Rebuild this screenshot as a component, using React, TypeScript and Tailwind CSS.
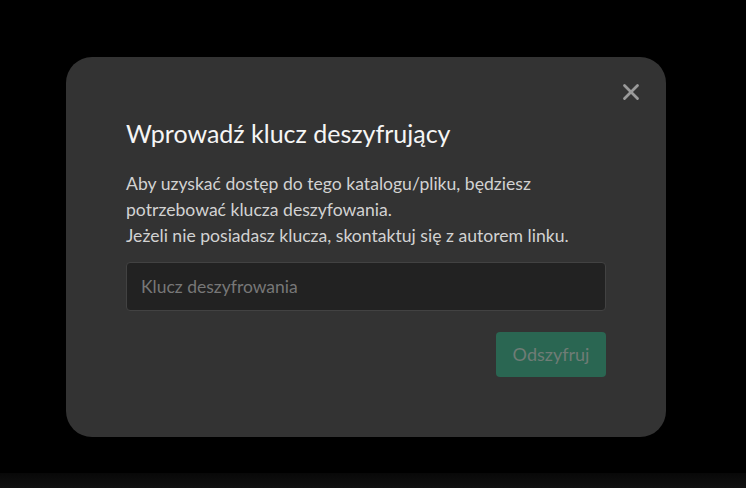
import { X } from 'lucide-react';

export default function App() {
  return (
    <div
      className="relative h-[488px] w-[746px] overflow-hidden bg-black"
      style={{ fontFamily: 'Lato, "Noto Sans", sans-serif' }}
    >
      <div className="pl-[66px] pt-[57px]">
        <div className="relative w-[600px] rounded-[26px] bg-[#333333] px-[60px] pb-[60px] pt-[60px]">
          <button className="absolute right-[22px] top-[22px] flex h-[26px] w-[26px] items-center justify-center text-[#9a9a9a]">
            <X size={28} strokeWidth={2.6} />
          </button>
          <h2 className="text-[25px] leading-[32px] font-normal text-[#f5f5f5]">Wprowadź klucz deszyfrujący</h2>
          <p className="mt-[22px] text-[17.6px] leading-[26px] text-[#d2d2d2]">
            Aby uzyskać dostęp do tego katalogu/pliku, będziesz potrzebować klucza deszyfowania.
            <br />
            Jeżeli nie posiadasz klucza, skontaktuj się z autorem linku.
          </p>
          <input
            placeholder="Klucz deszyfrowania"
            className="mt-[13px] h-[49px] w-full rounded-[4px] border border-[#424242] bg-[#222222] px-[14px] text-[17.5px] text-[#dddddd] placeholder:text-[#777777] outline-none"
          />
          <div className="mt-[21px] flex justify-end">
            <button
              disabled
              className="h-[45px] w-[110px] rounded-[4px] bg-[#2a6652] text-[18px] text-[#6f7c76]"
            >
              Odszyfruj
            </button>
          </div>
        </div>
      </div>
      <div className="absolute bottom-0 left-0 h-[15px] w-full bg-gradient-to-b from-[#080808] to-[#111111]" />
    </div>
  );
}
